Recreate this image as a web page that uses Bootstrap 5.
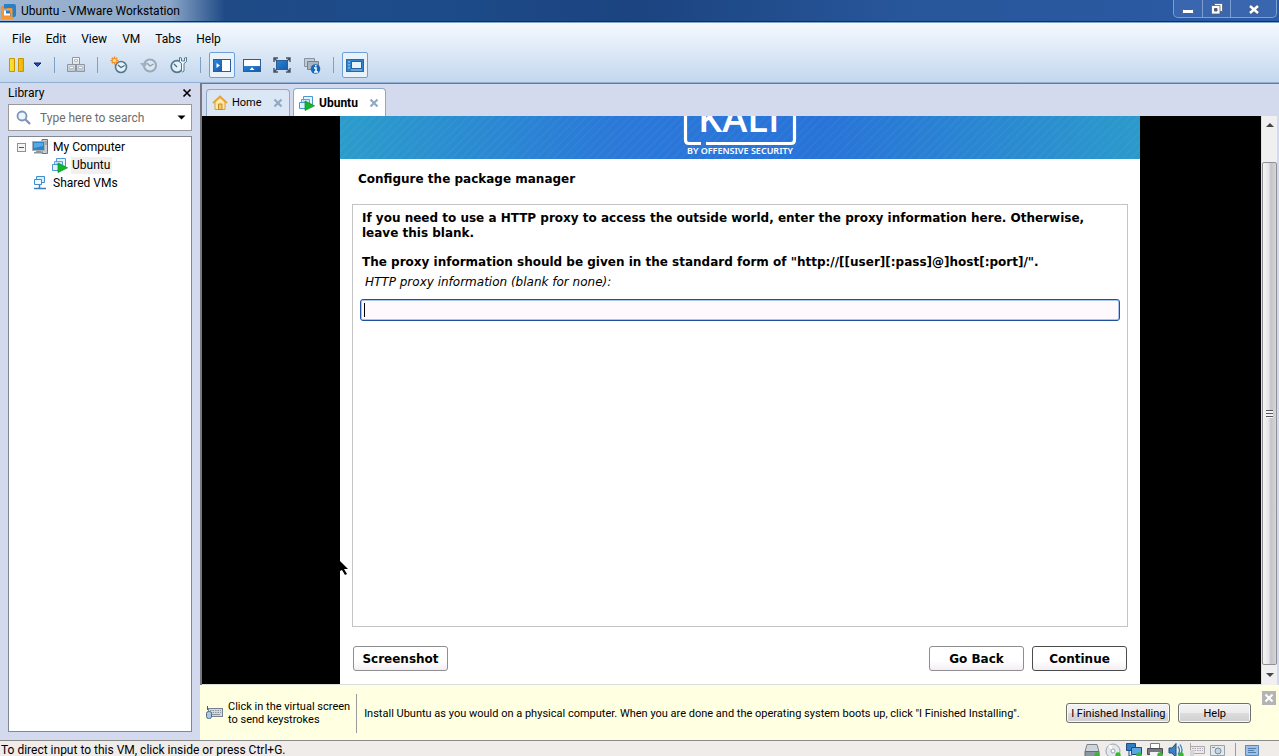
<!DOCTYPE html>
<html lang="en">
<head>
<meta charset="utf-8">
<meta name="viewport" content="width=device-width, initial-scale=1">
<title>Ubuntu - VMware Workstation</title>
<link href="https://cdn.jsdelivr.net/npm/bootstrap@5.3.0/dist/css/bootstrap.min.css" rel="stylesheet">
<style>
body{font:12px/18px Roboto,"Noto Sans",sans-serif;color:#000;background:#d4daee}
svg{display:block;flex:none}
button{border:0;background:none;padding:0;color:inherit;font:inherit}
.titlebar{height:23px;background:linear-gradient(90deg,#9fb6d2 0,#8ba6c8 170px,#1f4a86 225px,#1d4b8a 420px,#1b4480 640px,#28569a 900px,#2c5ba5 100%);border-bottom:1px solid #7fa5cf;box-shadow:inset 0 -1px #12305c;padding-left:1px}
.winbtns{height:18px;border:1px solid #7d9fd0;border-top:0;border-radius:0 0 5px 5px;margin-right:2px;background:#3a66b0}
.winbtns button{width:28px;display:flex;align-items:center;justify-content:center}
.winbtns button+button{border-left:1px solid #7d9fd0}
.winbtns button:last-child{width:46px}
.chrome{height:60px;background:linear-gradient(#f5f9fe,#dfeaf7 45%,#c3d7ee);border-bottom:1px solid #90b0d6}
.menus{height:32px;padding:7px 0 0 12px;gap:15px}
.menus a{color:#000;text-decoration:none}
.tools{height:20px;gap:8px;padding-left:9px}
.vsep{width:1px;height:16px;background:#7f9fc4}
.toolgroup{gap:12px}
.viewbtn{width:26px;height:26px;border:1px solid transparent;border-radius:2px;display:flex;align-items:center;justify-content:center}
.viewbtn.active{border-color:#6f9fd8;background:#e9f1fb}
.library{width:200px;flex:none;padding:0 8px 8px}
.libhead{height:21px;padding-bottom:2px}
.searchbox{height:27px;border:1px solid #9a9a9a;background:#fff;padding:0 5px 0 6px;gap:8px}
.searchbox input{border:0;outline:0;width:100%;min-width:0;padding:0;color:#000}
.searchbox input::placeholder{color:#6d6d6d;opacity:1}
.tree{border:1px solid #828790;background:#fff;margin-top:5px;padding:1px 0 0 8px}
.tree li{height:18px;display:flex;align-items:center}
.tree li>span:last-child{margin-left:5px}
.tree .child{padding-left:35px}
.tree .peer{padding-left:15px}
.expander{width:9px;height:9px;border:1px solid #919191;background:#f4f4f4;display:flex;align-items:center;justify-content:center;margin-right:6px}
.expander::before{content:"";width:5px;height:1px;background:#3a54a0}
.tree li>.picked:last-child{background:#f0f0f0;padding:0 2px 0 1px;margin-left:3px;height:17px;line-height:17px}
.work{border-left:2px solid #77777f;border-top:1px solid #77777d}
.tabstrip{height:32px;padding:5px 0 0 4px;gap:3px}
.vmtab{border:1px solid #8da9c6;border-bottom:0;border-radius:4px 4px 0 0;background:#dce7f5;padding:0 6px 0 5px;width:84px;font-size:11px}
.vmtab.active{background:#fff;width:93px;margin-top:-1px;font-weight:700;font-size:12px}
.screenrow{padding-right:2px}
.screen{background:#000;border-bottom:1px solid #dcdcdc;padding-left:17px}
.installer{width:100%;max-width:800px;background:#fff;font:bold 12px/15px "DejaVu Sans",sans-serif}
.banner{height:43px;background:repeating-linear-gradient(135deg,rgba(255,255,255,.03) 0 2px,transparent 2px 6px),linear-gradient(90deg,#2b9ccb,#2a78d8 35%,#2873d8 60%,#2b9acb)}
.step{font:inherit;margin:0;padding:13px 0 17px 18px}
.pane{border:1px solid #c4c4c4;margin:0 12px;padding:6px 7px 0}
.pane p{margin:0 2px 14px}
.pane label{font-weight:400;font-style:italic;margin:-9px 0 9px 5px}
.pane input{display:block;width:100%;height:22px;border:1px solid #1f4f9f;border-radius:3px;box-shadow:inset 0 0 0 1px #a9c5ee;background:linear-gradient(#000,#000) 3px center/1px 14px no-repeat #fdf9fd;padding:0 4px;outline:0}
.ibtns{padding:19px 13px 13px;gap:8px}
.ibtns button{width:95px;height:25px;border:1px solid #8e8e8e;border-radius:3px;background:linear-gradient(#fff 60%,#f3eef3);font-weight:700;padding-top:1px}
.ibtns button:last-child{border-color:#4c4c4c}
.vscroll{width:16px;flex:none;background:#f0f0f0;border-left:1px solid #e0e0e0;padding:7px 0 8px}
.vthumb{border:1px solid #8f8f95;border-radius:2px;background:linear-gradient(90deg,#f6f6f6,#e4e4e6 45%,#c3c3c8 60%,#d6d6da);width:15px;margin:35px 0 8px}
.grip{width:7px;height:8px;background:repeating-linear-gradient(#555 0 1px,#f4f4f4 1px 3px)}
.hintbar{height:55px;margin-left:-2px;background:#ffffe1;font-size:11px;line-height:13px;padding:1px 28px 0 6px;position:relative}
.hintbar .keys{margin-left:5px}
.hintbar .rule{width:1px;height:39px;background:#9a9a9a;margin:0 7px 0 6px}
.hintbar .cmd{height:20px;border:1px solid #707070;border-radius:3px;background:linear-gradient(#f3f3f3,#ececec 48%,#dcdcdc 52%,#cfcfcf);box-shadow:inset 0 0 0 1px #fafafa}
.dismiss{position:absolute;right:3px;top:6px;width:14px;height:14px;background:#b4b4b4;display:flex;align-items:center;justify-content:center}
.status{height:16px;background:#f0ecea;border-top:1px solid #8a8a8a;padding:1px 20px 0 1px;line-height:16px}
.status .devs{gap:5px;padding-top:1px}
.pointer{position:absolute;left:0;top:443px}
</style>
</head>
<body class="vh-100 d-flex flex-column overflow-hidden">

<svg width="0" height="0" class="position-absolute" aria-hidden="true">
  <defs>
    <linearGradient id="gBlue" x1="0" y1="0" x2="1" y2="1"><stop offset="0" stop-color="#2a86d8"/><stop offset="1" stop-color="#1a5aa8"/></linearGradient>
    <linearGradient id="gGrey" x1="0" y1="0" x2="0" y2="1"><stop offset="0" stop-color="#fff"/><stop offset="1" stop-color="#b9c2cc"/></linearGradient>
    <linearGradient id="gGold" x1="0" y1="0" x2="1" y2="0"><stop offset="0" stop-color="#ffe23a"/><stop offset="1" stop-color="#f0b400"/></linearGradient>
    <symbol id="vmOn" viewBox="0 0 16 16">
      <path d="M4.500 1.500h9v8h-9z" fill="#e4f3ff" stroke="#4b96d4"/><path d="M2.500 4.500h8v7h-8z" fill="#c4e2f8" fill-opacity=".85" stroke="#5ba3dc"/>
      <path d="M.5 7.500h7v6h-7z" fill="#e0f0fc" stroke="#4b96d4"/><path d="M6 6v9.500l9.500-4.700z" fill="#10b82c" stroke="#078a1c" stroke-width=".7"/>
    </symbol>
    <symbol id="tabX" viewBox="0 0 10 10"><path d="M1.500 1.500l7 7M8.500 1.500l-7 7" stroke="#8fa9c4" stroke-width="2.200"/></symbol>
    <symbol id="led" viewBox="0 0 6 6"><circle cx="3" cy="3" r="2.700" fill="#36b92f"/></symbol>
  </defs>
</svg>

<header>
  <div class="titlebar d-flex">
    <svg width="16" height="16" viewBox="0 0 16 16" class="mt-1"><rect x="0" y="2" width="13" height="13" rx="2" fill="#f58a1c"/><path d="M3 0h10q2 0 2 2v9q0 2-2 2H9V9h2V4H6v3H3z" fill="#2b7fc8"/><path d="M1.500 5.500h9v8h-9z" fill="none" stroke="#f79a34" stroke-width="2"/><rect x="3" y="6.500" width="6" height="5" fill="#fff"/><rect x="5" y="6.500" width="4" height="3" fill="#2b7fc8"/></svg>
    <span class="ms-1 pt-1 lh-sm">Ubuntu - VMware Workstation</span>
    <div class="winbtns d-flex ms-auto">
      <button aria-label="Minimize"><svg width="12" height="14" viewBox="0 0 12 14"><rect x=".5" y="7.500" width="11" height="4" rx="1" fill="#fff" stroke="#555d70"/></svg></button>
      <button aria-label="Restore"><svg width="12" height="14" viewBox="0 0 12 14"><path d="M3.500 1.500h8v8h-8z" fill="#fff" stroke="#555d70" stroke-width=".8"/><path d="M.5 3.500h8.500v8.500H.5z" fill="#fff" stroke="#555d70" stroke-width=".8"/><path d="M3.500 6.500h2.500v2.500H3.500z" fill="#3a66b0" stroke="#555d70"/></svg></button>
      <button aria-label="Close"><svg width="12" height="14" viewBox="0 0 12 14"><path d="M2 4l8 7M10 4l-8 7" stroke="#555d70" stroke-width="4"/><path d="M2 4l8 7M10 4l-8 7" stroke="#fff" stroke-width="2.500"/></svg></button>
    </div>
  </div>
  <div class="chrome">
    <nav class="menus d-flex"><a href="#">File</a><a href="#">Edit</a><a href="#">View</a><a href="#">VM</a><a href="#">Tabs</a><a href="#">Help</a></nav>
    <div class="tools d-flex align-items-center">
      <div class="toolgroup d-flex align-items-center">
        <div class="d-flex align-items-center gap-2">
          <button aria-label="Suspend"><svg width="16" height="16" viewBox="0 0 16 16"><path d="M.5 1.500h5v13h-5zM9.500 1.500h5v13h-5z" fill="url(#gGold)" stroke="#c99400"/></svg></button>
          <button aria-label="Power options"><svg width="9" height="6" viewBox="0 0 9 6"><path d="M1 1h7L4.500 4.500z" fill="#1f4fd0" stroke="#0a1f66"/></svg></button>
        </div>
        <span class="vsep"></span>
        <button aria-label="Send Ctrl+Alt+Del"><svg width="18" height="18" viewBox="0 0 18 18"><g fill="url(#gGrey)" stroke="#8d97a2"><path d="M5.500 1.500h7v7h-7zM.5 8.500h8v7h-8zM9.500 8.500h8v7h-8z"/><path d="M7.500 3.500h3v2h-3zM2.500 10.500h4v2h-4zM11.500 10.500h4v2h-4z" fill="#fff" stroke="#b4bcc4"/></g></svg></button>
        <span class="vsep"></span>
        <button aria-label="Take snapshot"><svg width="18" height="18" viewBox="0 0 18 18"><circle cx="11" cy="11" r="5.500" fill="#e4f1f8" stroke="#54788f" stroke-width="1.600"/><path d="M8 9l3 2.500 3.500-2" fill="none" stroke="#456a82" stroke-width="1.300"/><path d="M4.500.5v8M.5 4.500h8M1.800 1.800l5.400 5.400M7.200 1.800L1.800 7.200" stroke="#f08a20" stroke-width="1.400"/><circle cx="4.500" cy="4.500" r="1.600" fill="#ffe9a0"/></svg></button>
        <button aria-label="Revert snapshot"><svg width="18" height="18" viewBox="0 0 18 18"><circle cx="10" cy="9.500" r="6" fill="#dbe6f1" stroke="#9aa9b9" stroke-width="2"/><path d="M7 7l3 3 3.500-2" fill="none" stroke="#8d9dad" stroke-width="1.300"/><path d="M0 7h8L4 12z" fill="#a3b1c0"/></svg></button>
        <button aria-label="Manage snapshots"><svg width="18" height="18" viewBox="0 0 18 18"><circle cx="7" cy="10.500" r="5.800" fill="#e4f1f8" stroke="#54788f" stroke-width="1.700"/><path d="M4 8l3 3" stroke="#456a82" stroke-width="1.300"/><path d="M9.500 1.500v4l2 2v7.500q1.200 2 2.500 0V7.500l2.500-2v-4l-2 .5v3h-3v-3z" fill="#f4fafd" stroke="#54788f"/></svg></button>
        <span class="vsep"></span>
      </div>
      <div class="d-flex gap-1">
        <button class="viewbtn active" aria-label="Show library"><svg width="18" height="13" viewBox="0 0 18 13"><rect x=".5" y=".5" width="17" height="12" fill="#fff" stroke="#2a5f9e"/><path d="M1 1h8v11H1z" fill="url(#gBlue)"/><path d="M3.500 4l3.500 2.500L3.500 9z" fill="#fff"/></svg></button>
        <button class="viewbtn" aria-label="Show thumbnail bar"><svg width="18" height="13" viewBox="0 0 18 13"><rect x=".5" y=".5" width="17" height="12" fill="#fff" stroke="#2a5f9e"/><path d="M1 7h16v5H1z" fill="url(#gBlue)"/><path d="M6.500 11L9 8.200l2.500 2.800z" fill="#fff"/></svg></button>
        <button class="viewbtn" aria-label="Full screen"><svg width="18" height="16" viewBox="0 0 18 16"><rect x="3.500" y="3.500" width="11" height="9" fill="url(#gBlue)" stroke="#2a5f9e"/><path d="M1 5V1h4M13 1h4v4M17 11v4h-4M5 15H1v-4M1 1l3 3M17 1l-3 3M17 15l-3-3M1 15l3-3" fill="none" stroke="#44525f" stroke-width="1.400"/></svg></button>
        <button class="viewbtn" aria-label="Unity"><svg width="18" height="18" viewBox="0 0 18 18"><g transform="translate(1 1)"><path d="M.5 1.500h10v8H.5z" fill="#c3ccd6" stroke="#8893a0"/><path d="M3.500 4.500h11v8h-11z" fill="#a8b4c0" stroke="#76828f"/><circle cx="11.500" cy="12" r="4.800" fill="#1a68bc"/><path d="M10 11h2v4m-2 0h4M11 8.800h1.500" stroke="#fff" stroke-width="1.500" fill="none"/></g></svg></button>
      </div>
      <span class="vsep"></span>
      <button class="viewbtn active" aria-label="Console view"><svg width="18" height="13" viewBox="0 0 18 13"><rect x=".5" y=".5" width="17" height="12" fill="#2f83cc" stroke="#2a68a8"/><rect x="5.500" y="2.500" width="10" height="7" fill="#e8f2fb" stroke="#2563a0"/><path d="M3 2v9" stroke="#cfe4f6" stroke-dasharray="1.500 1.500"/><path d="M5 11h11" stroke="#9cc6ea"/></svg></button>
    </div>
  </div>
</header>

<div class="d-flex flex-grow-1 overflow-hidden">
  <aside class="library d-flex flex-column">
    <div class="libhead d-flex justify-content-between align-items-center"><span>Library</span>
      <button aria-label="Close library"><svg width="10" height="10" viewBox="0 0 10 10"><path d="M1.500 1.500l7 7M8.500 1.500l-7 7" stroke="#000" stroke-width="1.700"/></svg></button></div>
    <div class="searchbox d-flex align-items-center">
      <svg width="17" height="17" viewBox="0 0 17 17"><circle cx="7" cy="7" r="4.500" fill="#eef4fb" stroke="#7c93bb" stroke-width="1.800"/><path d="M10.500 10.500l4.500 4.500" stroke="#7c93bb" stroke-width="2.300"/></svg>
      <input type="text" placeholder="Type here to search" aria-label="Search library">
      <button aria-label="Search options"><svg width="9" height="5" viewBox="0 0 9 5"><path d="M.5.5h8L4.500 4.500z"/></svg></button>
    </div>
    <ul class="tree list-unstyled mb-0 flex-grow-1">
      <li><span class="expander"></span>
        <svg width="16" height="16" viewBox="0 0 16 16"><path d="M10 .5h5.500v14H10z" fill="#c9ced4" stroke="#6d7680"/><path d="M11 3h4M11 5h4M11 11h2" stroke="#7c858e"/><rect x=".5" y="2.500" width="12" height="9" fill="#2b84c9" stroke="#a9b2ba"/><path d="M2 4h9v3L2 9z" fill="#58a9df"/><path d="M4 12h5v1h2v1.500H2V13h2z" fill="#8c949c"/></svg>
        <span>My Computer</span></li>
      <li class="child"><svg width="16" height="16"><use href="#vmOn"/></svg><span class="picked">Ubuntu</span></li>
      <li class="peer"><svg width="16" height="16" viewBox="0 0 16 16"><path d="M4.500 1.500h8v6h-8z" fill="#d9edfb" stroke="#3f8fd0"/><path d="M2.500 4.500h7v5h-7z" fill="#eef8ff" stroke="#3f8fd0"/><path d="M7.500 10v3M2 13.500h12M5 13.500h5" stroke="#3a7fbd" stroke-width="1.500"/></svg>
        <span>Shared VMs</span></li>
    </ul>
  </aside>

  <main class="work d-flex flex-column flex-grow-1">
    <div class="tabstrip d-flex">
      <div class="vmtab d-flex align-items-center"><svg width="16" height="16" viewBox="0 0 16 16"><path d="M3 7v7.500h10V7L8 2.500z" fill="#ffe9a6" stroke="#dd9e32"/><path d="M1 8l7-6.500L15 8" fill="none" stroke="#e8a33a" stroke-width="1.800"/><path d="M6.500 9h3.500v5.500H6.500z" fill="#f2c968" stroke="#c98a2a"/></svg><span class="ms-1">Home</span><button class="ms-auto" aria-label="Close Home"><svg width="10" height="10"><use href="#tabX"/></svg></button></div>
      <div class="vmtab active d-flex align-items-center"><svg width="16" height="16"><use href="#vmOn"/></svg><span class="ms-1">Ubuntu</span><button class="ms-auto" aria-label="Close Ubuntu"><svg width="10" height="10"><use href="#tabX"/></svg></button></div>
    </div>

    <div class="screenrow d-flex flex-grow-1">
      <div class="screen d-flex flex-grow-1 justify-content-center">
        <section class="installer d-flex flex-column position-relative">
          <div class="banner">
            <svg width="100%" height="43" viewBox="0 0 800 43" fill="#fff">
              <text x="358" y="16" font-family="Open Sans, sans-serif" font-weight="600" font-size="38">KALI</text>
              <path d="M345.500 0v24q0 3.500 3.500 3.500h12M366 27.500h85q3.500 0 3.500-3.500V0" fill="none" stroke="#fff" stroke-width="3.200"/>
              <text x="400" y="38" text-anchor="middle" font-family="Noto Sans, sans-serif" font-weight="600" font-size="9">BY OFFENSIVE SECURITY</text>
            </svg>
          </div>
          <h1 class="step" id="step">Configure the package manager</h1>
          <form class="pane flex-grow-1" aria-labelledby="step">
            <p>If you need to use a HTTP proxy to access the outside world, enter the proxy information here. Otherwise, leave this blank.</p>
            <p>The proxy information should be given in the standard form of "http://[[user][:pass]@]host[:port]/".</p>
            <label class="d-block" for="proxy">HTTP proxy information (blank for none):</label>
            <input id="proxy" type="text">
          </form>
          <div class="ibtns d-flex">
            <button class="me-auto">Screenshot</button><button>Go Back</button><button>Continue</button>
          </div>
          <svg class="pointer" width="10" height="16" viewBox="0 0 10 16"><path d="M0 2l8 8H4l3 5-2 1-3-5-2 1z"/></svg>
        </section>
      </div>
      <div class="vscroll d-flex flex-column align-items-center">
        <svg width="8" height="4" viewBox="0 0 8 4"><path d="M4 0l4 4H0z" fill="#444"/></svg>
        <div class="vthumb flex-grow-1 d-flex align-items-center justify-content-center"><span class="grip"></span></div>
        <svg width="8" height="4" viewBox="0 0 8 4"><path d="M0 0h8L4 4z" fill="#444"/></svg>
      </div>
    </div>

    <div class="hintbar d-flex align-items-center">
      <svg width="17" height="14" viewBox="0 0 17 14"><path d="M1.500 0v4" stroke="#555"/><rect x="2.500" y="2.500" width="14" height="8" fill="#d4dae0" stroke="#77828d"/><path d="M4 4.500h11M4 6.500h11" stroke="#8b96a1" stroke-dasharray="1.500 1"/><path d="M6 8.500h8" stroke="#8b96a1"/><rect x=".5" y="5.500" width="5" height="7" rx="2" fill="#a9c8e2" stroke="#4b6d8b"/></svg>
      <span class="keys">Click in the virtual screen<br>to send keystrokes</span>
      <span class="rule"></span>
      <span>Install Ubuntu as you would on a physical computer. When you are done and the operating system boots up, click "I Finished Installing".</span>
      <button class="cmd ms-auto me-2 px-1 text-nowrap">I Finished Installing</button>
      <button class="cmd px-4">Help</button>
      <button class="dismiss" aria-label="Dismiss"><svg width="10" height="10" viewBox="0 0 10 10"><path d="M1.500 1.500l7 7M8.500 1.500l-7 7" stroke="#fff" stroke-width="2"/></svg></button>
    </div>
  </main>
</div>

<footer class="status d-flex justify-content-between overflow-hidden flex-shrink-0">
  <span class="text-nowrap">To direct input to this VM, click inside or press Ctrl+G.</span>
  <div class="devs d-flex">
    <svg width="16" height="16" viewBox="0 0 16 16"><path d="M3 1.500h10l2 7H1z" fill="#cdd4da" stroke="#7b858e"/><path d="M1 8.500h14v5H1z" fill="#8d979f" stroke="#646d75"/><use href="#led" x="10" y="9" width="6" height="6"/></svg>
    <svg width="16" height="16" viewBox="0 0 16 16"><circle cx="8" cy="8" r="7" fill="#e4e8ec" stroke="#9ba4ad"/><path d="M8 8L3 3l3-1.500z" fill="#fff"/><circle cx="8" cy="8" r="2" fill="#fff" stroke="#9ba4ad"/><use href="#led" x="10" y="9" width="6" height="6"/></svg>
    <svg width="16" height="16" viewBox="0 0 16 16"><path d="M.5.5h9v7h-9z" fill="#2f7fc4" stroke="#1b4f80"/><path d="M3 8v5h3" fill="none" stroke="#1b4f80"/><path d="M5.500 4.500h10v7h-10z" fill="#58a7e2" stroke="#1b4f80"/><use href="#led" x="10" y="9" width="6" height="6"/></svg>
    <svg width="16" height="16" viewBox="0 0 16 16"><path d="M3.500.5h9v5h-9z" fill="#fff" stroke="#7d7d86"/><path d="M.5 5.500h15v6H.5z" fill="#77777f" stroke="#4d4d55"/><path d="M3 9h10v4H3z" fill="#f4f4f4"/><use href="#led" x="10" y="9" width="6" height="6"/></svg>
    <svg width="16" height="16" viewBox="0 0 16 16"><path d="M1 5h3l4-4.500v14L4 10H1z" fill="#3d83bf" stroke="#1b4f80"/><path d="M10 3.500q3 4 0 8M12 1.500q4 6 0 11" fill="none" stroke="#2f7fc4" stroke-width="1.300"/><use href="#led" x="10" y="9" width="6" height="6"/></svg>
    <svg width="16" height="16" viewBox="0 0 16 16"><path d="M1.500 0v4" stroke="#aaa"/><path d="M1.500 3.500h14v7h-14z" fill="#ececec" stroke="#a9a9ad"/><path d="M3 5.500h11M3 7.500h11" stroke="#a9a9ad" stroke-dasharray="1.500 1"/><rect x="1" y="7" width="4" height="6" fill="#d4d4d8"/></svg>
    <svg width="16" height="16" viewBox="0 0 16 16"><path d="M.5 2.500h14v10H.5z" fill="#e3e8ec" stroke="#98a2ac"/><circle cx="8" cy="8" r="3" fill="#c3d4e2" stroke="#7d8a96"/><path d="M2 4.500h3" stroke="#8a949e"/></svg>
    <span class="vsep mx-1"></span>
    <svg width="14" height="16" viewBox="0 0 14 16"><path d="M.5 2.500h13v10H.5z" fill="#9fc0e4" stroke="#5d88b8"/><path d="M3 5.500h8M3 7.500h6M3 9.500h8" stroke="#4f7db0"/></svg>
  </div>
</footer>
<script src="https://cdn.jsdelivr.net/npm/bootstrap@5.3.0/dist/js/bootstrap.bundle.min.js"></script>
</body>
</html>
